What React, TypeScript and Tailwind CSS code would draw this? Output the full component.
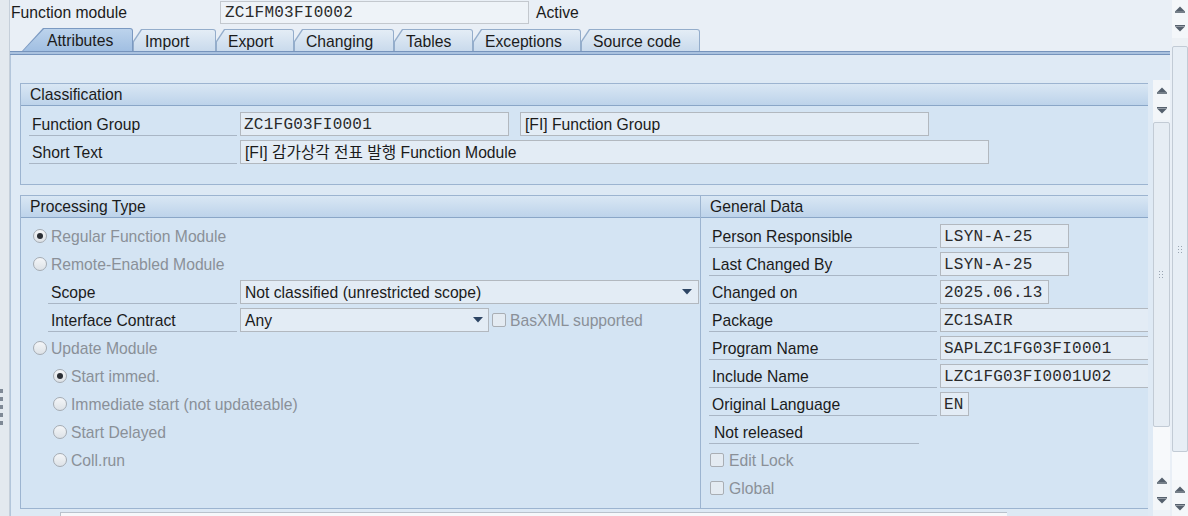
import React from 'react';

const SANS = "font-['Liberation_Sans','Noto_Sans_CJK_KR',Arial,sans-serif]";
const MONO = "font-['Liberation_Mono','DejaVu_Sans_Mono',monospace] text-[16px] tracking-[0.25px] text-[#2a2a2a]";

function UpArrow() {
  return (
    <svg width="10" height="7" viewBox="0 0 10 7">
      <path d="M5 0.5L9.5 5H0.5Z" fill="#56616e" />
      <rect x="0" y="5.2" width="10" height="1.6" fill="#56616e" />
    </svg>
  );
}

function DownArrow() {
  return (
    <svg width="10" height="7" viewBox="0 0 10 7">
      <rect x="0" y="0" width="10" height="1.6" fill="#56616e" />
      <path d="M0.5 2L9.5 2L5 6.5Z" fill="#56616e" />
    </svg>
  );
}

function DropArrow() {
  return (
    <svg width="10" height="6" viewBox="0 0 10 6" className="shrink-0">
      <path d="M0 0H10L5 5.5Z" fill="#2d4564" />
    </svg>
  );
}

function Grip() {
  return (
    <svg width="5" height="7" viewBox="0 0 5 7">
      {[0, 3, 6].map((y) => (
        <g key={y}>
          <rect x="0" y={y} width="1" height="1" fill="#9aa5b2" />
          <rect x="3" y={y} width="1" height="1" fill="#9aa5b2" />
        </g>
      ))}
    </svg>
  );
}

function Radio({ checked }: { checked?: boolean }) {
  return (
    <span className="w-[14px] h-[14px] shrink-0 rounded-full border border-[#a5abb2] bg-linear-to-b from-[#f4f6f8] to-[#dde2e7] flex items-center justify-center">
      {checked && <span className="w-[6px] h-[6px] rounded-full bg-[#2a2e34]" />}
    </span>
  );
}

function Check() {
  return <span className="w-[14px] h-[14px] shrink-0 rounded-[2px] border border-[#a9aeb4] bg-[#e4ebf2]" />;
}

function Label({ w, pl = 'pl-[3px]', children }: { w: string; pl?: string; children: React.ReactNode }) {
  return (
    <div className={`${w} ${pl} h-[24px] pt-[2px] shrink-0 flex items-center border-b border-[#a9b6c5] text-[#1b1b1b] whitespace-nowrap`}>
      {children}
    </div>
  );
}

function Field({ w, mono = true, open = false, children }: { w: string; mono?: boolean; open?: boolean; children: React.ReactNode }) {
  return (
    <div
      className={`${w} h-[24px] pt-[2px] shrink-0 flex items-center bg-[#e3ecf5] border border-[#b2b8bf] whitespace-nowrap overflow-hidden ${open ? 'border-r-0' : ''} ${mono ? MONO + ' pl-[3px]' : 'pl-[4px] text-[#1b1b1b]'}`}
    >
      {children}
    </div>
  );
}

function Drop({ w, pr, children }: { w: string; pr: string; children: React.ReactNode }) {
  return (
    <div className={`${w} ${pr} h-[24px] shrink-0 flex items-center justify-between pl-[4px] bg-[#e3ecf5] border border-[#b2b8bf] text-[#1b1b1b] whitespace-nowrap`}>
      <span className="pt-[2px]">{children}</span>
      <DropArrow />
    </div>
  );
}

function Group({ title, className, children }: { title: string; className: string; children: React.ReactNode }) {
  return (
    <div className={`border border-[#9cb4d0] bg-[#d4e4f3] flex flex-col ${className}`}>
      <div className="h-[22px] pt-[1px] shrink-0 flex items-center pl-[9px] bg-linear-to-b from-[#d9e7f4] to-[#bdd3ea] border-b border-[#8aa6c7] text-[#1b1b1b]">
        {title}
      </div>
      {children}
    </div>
  );
}

function Tab({ label, w, active }: { label: string; w: string; active?: boolean }) {
  if (active) {
    return (
      <div className={`${w} h-[23px] p-[1px] pb-0 bg-[#7b99c1] rounded-tr-[3px] [clip-path:polygon(21px_0,100%_0,100%_100%,0_100%)]`}>
        <div className="h-full w-full pl-[24px] pt-[2px] flex items-center rounded-tr-[2px] bg-linear-to-b from-[#bcd3ec] to-[#a1bfe2] [clip-path:polygon(21px_0,100%_0,100%_100%,0_100%)]">
          {label}
        </div>
      </div>
    );
  }
  return (
    <div className={`${w} h-[22px] p-[1px] pb-0 bg-[#94adcb] rounded-tr-[3px] [clip-path:polygon(8px_0,100%_0,100%_100%,0_100%,0_12px)]`}>
      <div className="h-full w-full pl-[11px] pt-[2px] flex items-center rounded-tr-[2px] bg-linear-to-b from-[#e4edf6] to-[#c9daec] [clip-path:polygon(8px_0,100%_0,100%_100%,0_100%,0_12px)]">
        {label}
      </div>
    </div>
  );
}

function Row({ pl, gap = 'gap-[3px]', children }: { pl: string; gap?: string; children: React.ReactNode }) {
  return <div className={`h-[28px] shrink-0 flex items-center ${pl} ${gap}`}>{children}</div>;
}

function Opt({ children }: { children: React.ReactNode }) {
  return <span className="pt-[2px] text-[#8a9098]">{children}</span>;
}

export default function App() {
  return (
    <div className={`w-[1188px] h-[516px] overflow-hidden flex bg-[#e9eff6] text-[15.7px] leading-none text-[#1b1b1b] ${SANS}`}>
      {/* left splitter */}
      <div className="w-[10px] shrink-0 bg-[#e3e9ef] border-r border-[#c5cfda] flex flex-col">
        <div className="mt-[389px] flex flex-col gap-[4px]">
          {[0, 1, 2, 3, 4].map((i) => (
            <span key={i} className="w-[3px] h-[4px] bg-[#7f8996]" />
          ))}
        </div>
      </div>

      {/* main */}
      <div className="w-[1162px] shrink-0 flex flex-col">
        <div className="h-[25px] shrink-0 flex items-start">
          <div className="w-[210px] h-[24px] pl-[1px] pt-[1px] flex items-center">Function module</div>
          <div className={`w-[309px] h-[23px] mt-[1px] pl-[4px] pt-[1px] flex items-center bg-[#eef3f8] border border-[#c3c8ce] ${MONO}`}>
            ZC1FM03FI0002
          </div>
          <div className="h-[24px] ml-[7px] pt-[1px] flex items-center">Active</div>
        </div>

        <div className="h-[26px] shrink-0 flex items-end pl-[12px]">
          <Tab label="Attributes" w="w-[111px]" active />
          <Tab label="Import" w="w-[83px]" />
          <Tab label="Export" w="w-[78px]" />
          <Tab label="Changing" w="w-[100px]" />
          <Tab label="Tables" w="w-[79px]" />
          <Tab label="Exceptions" w="w-[108px]" />
          <Tab label="Source code" w="w-[119px]" />
        </div>
        <div className="w-[1160px] h-[4px] shrink-0 bg-[#aac2df] border-y border-[#7694bc]" />

        <div className="w-[1160px] flex-1 min-h-0 flex bg-[#dfeaf5] border-l border-[#b3c6db] pl-[9px] pt-[25px]">
          {/* scroll content */}
          <div className="w-[1128px] shrink-0 overflow-hidden flex flex-col pt-[3px] bg-[#dde9f4]">
            <Group title="Classification" className="w-[1140px] shrink-0 h-[102px]">
              <div className="pt-[4px]">
                <Row pl="pl-[8px]">
                  <Label w="w-[208px]">Function Group</Label>
                  <Field w="w-[269px]">ZC1FG03FI0001</Field>
                  <div className="w-[5px]" />
                  <Field w="w-[409px]" mono={false}>[FI] Function Group</Field>
                </Row>
                <Row pl="pl-[8px]">
                  <Label w="w-[208px]">Short Text</Label>
                  <Field w="w-[749px]" mono={false}>[FI] 감가상각 전표 발행 Function Module</Field>
                </Row>
              </div>
            </Group>

            <div className="mt-[10px] flex-1 min-h-0 flex w-[1160px]">
              <Group title="Processing Type" className="w-[681px] shrink-0">
                <div className="pt-[4px]">
                  <Row pl="pl-[12px]" gap="gap-[4px]">
                    <Radio checked />
                    <Opt>Regular Function Module</Opt>
                  </Row>
                  <Row pl="pl-[12px]" gap="gap-[4px]">
                    <Radio />
                    <Opt>Remote-Enabled Module</Opt>
                  </Row>
                  <Row pl="pl-[27px]">
                    <Label w="w-[189px]">Scope</Label>
                    <Drop w="w-[459px]" pr="pr-[6px]">Not classified (unrestricted scope)</Drop>
                  </Row>
                  <Row pl="pl-[27px]">
                    <Label w="w-[189px]">Interface Contract</Label>
                    <Drop w="w-[249px]" pr="pr-[5px]">Any</Drop>
                    <Check />
                    <span className="ml-[1px] pt-[2px] text-[#8a9098]">BasXML supported</span>
                  </Row>
                  <Row pl="pl-[12px]" gap="gap-[4px]">
                    <Radio />
                    <Opt>Update Module</Opt>
                  </Row>
                  <Row pl="pl-[32px]" gap="gap-[4px]">
                    <Radio checked />
                    <Opt>Start immed.</Opt>
                  </Row>
                  <Row pl="pl-[32px]" gap="gap-[4px]">
                    <Radio />
                    <Opt>Immediate start (not updateable)</Opt>
                  </Row>
                  <Row pl="pl-[32px]" gap="gap-[4px]">
                    <Radio />
                    <Opt>Start Delayed</Opt>
                  </Row>
                  <Row pl="pl-[32px]" gap="gap-[4px]">
                    <Radio />
                    <Opt>Coll.run</Opt>
                  </Row>
                </div>
              </Group>

              <Group title="General Data" className="w-[470px] shrink-0 border-l-0">
                <div className="pt-[4px]">
                  <Row pl="pl-[8px]">
                    <Label w="w-[228px]">Person Responsible</Label>
                    <Field w="w-[129px]">LSYN-A-25</Field>
                  </Row>
                  <Row pl="pl-[8px]">
                    <Label w="w-[228px]">Last Changed By</Label>
                    <Field w="w-[129px]">LSYN-A-25</Field>
                  </Row>
                  <Row pl="pl-[8px]">
                    <Label w="w-[228px]">Changed on</Label>
                    <Field w="w-[109px]">2025.06.13</Field>
                  </Row>
                  <Row pl="pl-[8px]">
                    <Label w="w-[228px]">Package</Label>
                    <Field w="w-[230px]" open>ZC1SAIR</Field>
                  </Row>
                  <Row pl="pl-[8px]">
                    <Label w="w-[228px]">Program Name</Label>
                    <Field w="w-[230px]" open>SAPLZC1FG03FI0001</Field>
                  </Row>
                  <Row pl="pl-[8px]">
                    <Label w="w-[228px]">Include Name</Label>
                    <Field w="w-[230px]" open>LZC1FG03FI0001U02</Field>
                  </Row>
                  <Row pl="pl-[8px]">
                    <Label w="w-[228px]">Original Language</Label>
                    <Field w="w-[29px]">EN</Field>
                  </Row>
                  <Row pl="pl-[8px]">
                    <Label w="w-[210px]" pl="pl-[5px]">Not released</Label>
                  </Row>
                  <Row pl="pl-[9px]" gap="gap-[5px]">
                    <Check />
                    <Opt>Edit Lock</Opt>
                  </Row>
                  <Row pl="pl-[9px]" gap="gap-[5px]">
                    <Check />
                    <Opt>Global</Opt>
                  </Row>
                </div>
              </Group>
            </div>

            {/* horizontal scroller edge */}
            <div className="h-[7px] shrink-0 flex items-end">
              <div className="w-[40px]" />
              <div className="w-[947px] h-[4px] border-t border-l border-[#b9c2cc] bg-[#f6f8fa]" />
            </div>
          </div>

          {/* inner vertical scrollbar */}
          <div className="ml-[5px] w-[17px] shrink-0 flex flex-col bg-[#eef3f8]">
            <div className="h-[20px] flex items-center justify-center bg-[#f3f6f9]"><UpArrow /></div>
            <div className="h-[20px] flex items-center justify-center bg-[#f3f6f9]"><DownArrow /></div>
            <div className="h-[305px] mt-[2px] border border-[#c2cbd5] bg-[#e6edf4] rounded-[2px] flex items-center justify-center">
              <Grip />
            </div>
            <div className="flex-1 bg-[#f7f9fb]" />
            <div className="h-[20px] flex items-center justify-center bg-[#f3f6f9]"><UpArrow /></div>
            <div className="h-[20px] flex items-center justify-center bg-[#f3f6f9]"><DownArrow /></div>
            <div className="h-[6px]" />
          </div>
        </div>
      </div>

      {/* outer vertical scrollbar */}
      <div className="w-[16px] shrink-0 flex flex-col bg-[#edf1f5]">
        <div className="h-[18px] flex items-center justify-center bg-[#f4f7fa]"><UpArrow /></div>
        <div className="h-[20px] flex items-center justify-center bg-[#f4f7fa]"><DownArrow /></div>
        <div className="h-[406px] mt-[8px] border border-[#c2cbd5] bg-[#e7eef5] rounded-[2px] flex items-center justify-center">
          <Grip />
        </div>
        <div className="flex-1 bg-[#f8fafc]" />
        <div className="h-[18px] flex items-center justify-center bg-[#f4f7fa]"><UpArrow /></div>
        <div className="h-[18px] flex items-center justify-center bg-[#f4f7fa]"><DownArrow /></div>
      </div>
    </div>
  );
}
